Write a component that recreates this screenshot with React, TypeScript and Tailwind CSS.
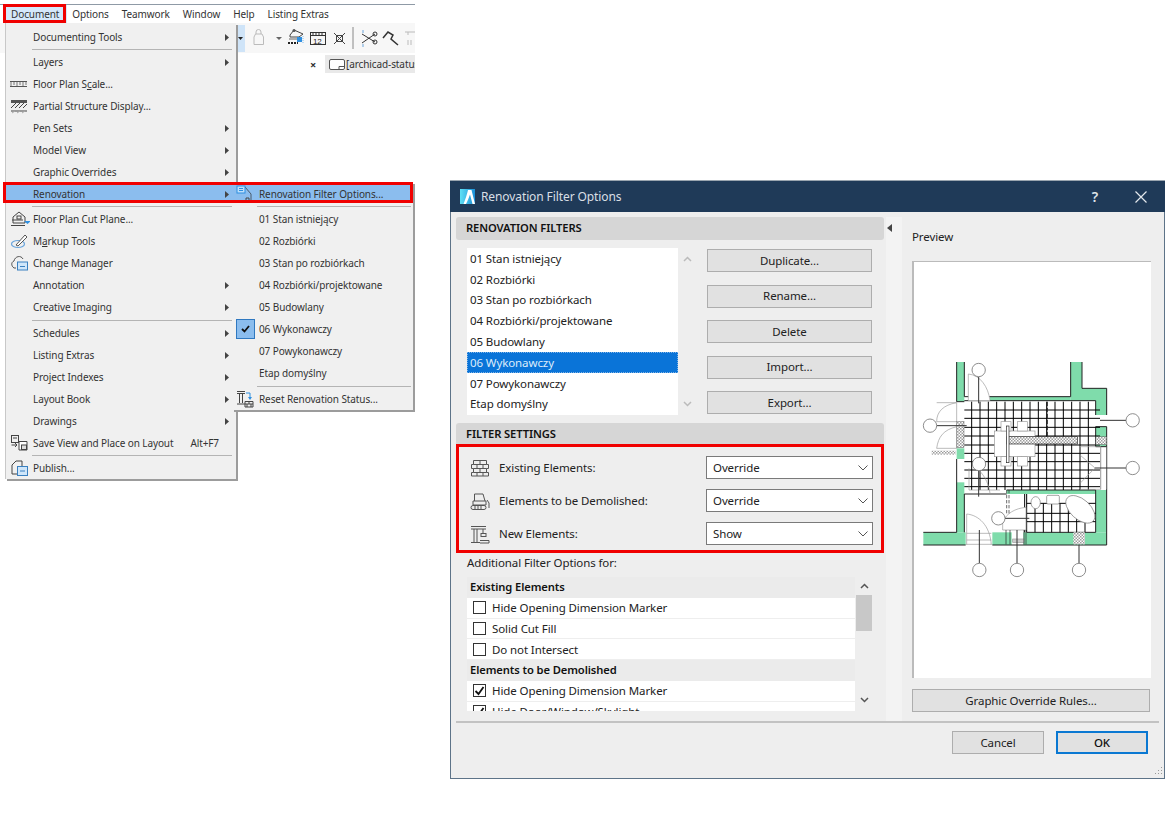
import React from "react";

const S = { fill: "none", stroke: "#444", strokeWidth: 1 } as const;

function Ic({ children, w = 20, h = 18 }: { children: React.ReactNode; w?: number; h?: number }) {
  return (
    <svg width={w} height={h} viewBox={`0 0 ${w} ${h}`} className="block">
      {children}
    </svg>
  );
}

const IScale = () => (
  <Ic>
    <path d="M0 6.5H17M0 11.5H17" {...S} stroke="#555" />
    <path d="M1 7v4M4 7v3M7 7v4M10 7v3M13 7v4M16 7v3" {...S} stroke="#777" />
  </Ic>
);
const IHatch = () => (
  <Ic>
    <rect x="1" y="3" width="16" height="3" fill="#555" />
    <path d="M1 11L6 6M5 11L10 6M9 11L14 6M13 11L17 7M1 14H17" {...S} stroke="#444" />
    <path d="M2 16l3-2M7 16l3-2M12 16l3-2" {...S} stroke="#aaa" />
  </Ic>
);
const ICut = () => (
  <Ic>
    <path d="M3 7L9 2L15 7V13H3Z" {...S} />
    <rect x="7" y="6" width="4" height="3" {...S} />
    <path d="M2 10H13M1 15.500H15" {...S} />
    <path d="M14 11H21L17.500 14Z" fill="#2f8fe0" />
  </Ic>
);
const IMarkup = () => (
  <Ic>
    <ellipse cx="8" cy="12" rx="6.500" ry="3.500" fill="none" stroke="#6aa5dc" strokeWidth="1.200" />
    <path d="M6 13L15 3L17 5L8 14Z" fill="#fff" stroke="#555" />
  </Ic>
);
const ICloud = () => (
  <Ic>
    <path d="M6 14H4C1 12 1 8 4 7C5 2 11 1 13 5" {...S} stroke="#555" />
    <rect x="7.500" y="8" width="10" height="8" fill="#cfe6fa" stroke="#3a80c0" />
    <path d="M10 12.500H15" stroke="#3a80c0" />
  </Ic>
);
const ISave = () => (
  <Ic>
    <rect x="1.500" y="1.500" width="7" height="7" {...S} />
    <path d="M3 4H7M1.500 11H7M5 9l2 2-2 2" {...S} />
    <path d="M9 7.500H17V16H9Z" fill="#fff" stroke="#444" />
    <rect x="11.500" y="11" width="5" height="4.500" fill="#ddd" stroke="#444" />
  </Ic>
);
const IPublish = () => (
  <Ic>
    <path d="M2 15V6L6 2H12V7" {...S} />
    <path d="M2 15H8" {...S} />
    <rect x="7.500" y="7.500" width="10" height="9" fill="#cfe6fa" stroke="#3a80c0" />
    <path d="M10 12H15" stroke="#3a80c0" />
  </Ic>
);
const IFilter = () => (
  <Ic>
    <path d="M2 2H9L15 9V16H7" {...S} stroke="#4a5a6a" />
    <rect x="1" y="1" width="8" height="7" fill="#bfe0fa" stroke="#2f8fe0" />
    <path d="M3 3.500H7M3 5.500H7" stroke="#2f8fe0" />
    <path d="M10 16v-3h3v3" {...S} />
  </Ic>
);
const IReset = () => (
  <Ic>
    <path d="M1 1.500H9M1 3.500H9M3.500 4V13M6.500 4V13M1 14H9" {...S} />
    <path d="M10 3H14V8" fill="none" stroke="#2f8fe0" />
    <path d="M12 7H16L14 10Z" fill="#2f8fe0" />
    <path d="M9 11.500H17V17H9ZM9 14H17M13 11.500V14M11 14V17M15 14V17" {...S} />
  </Ic>
);
const IBricks = () => (
  <Ic w={20} h={20}>
    <path d="M3.500 2.500H16.500V6.500H18.500V10.500H16.500V14.500H18.500V18H1.500V14.500H3.500V10.500H1.500V6.500H3.500Z" {...S} stroke="#555" />
    <path d="M3.500 6.500H16.500M3.500 10.500H16.500M3.500 14.500H16.500M10 2.500V6.500M7 6.500V10.500M13 6.500V10.500M10 10.500V14.500M7 14.500V18M13 14.500V18" {...S} stroke="#555" />
  </Ic>
);
const IDozer = () => (
  <Ic w={20} h={20}>
    <path d="M4.500 10V3H13L15 10" {...S} stroke="#555" />
    <path d="M3 10H16V14H3Z" {...S} stroke="#555" />
    <rect x="1" y="14.500" width="15" height="4" rx="2" {...S} stroke="#555" />
    <path d="M5 15V18M8 15V18M11 15V18M17 9L19 12V17" {...S} stroke="#555" />
  </Ic>
);
const ICrane = () => (
  <Ic w={20} h={20}>
    <path d="M1 2.500H16M1 5H16M4 5V18M7 5V18M1 18.500H10M13 5V9" {...S} stroke="#555" />
    <rect x="11" y="9.500" width="5" height="3" {...S} stroke="#555" />
    <path d="M10 16.500H19V19H10" {...S} stroke="#555" />
  </Ic>
);

type Row =
  | { sep: true; tall?: boolean }
  | { label: React.ReactNode; icon?: React.ReactNode; arrow?: boolean; hot?: boolean; kb?: string; check?: boolean };

const mainRows: Row[] = [
  { label: "Documenting Tools", arrow: true },
  { sep: true },
  { label: "Layers", arrow: true },
  { label: <>Floor Plan S<u>c</u>ale...</>, icon: <IScale /> },
  { label: "Partial Structure Display...", icon: <IHatch /> },
  { label: "Pen Sets", arrow: true },
  { label: "Model View", arrow: true },
  { label: "Graphic Overrides", arrow: true },
  { label: "Renovation", arrow: true, hot: true },
  { sep: true },
  { label: "Floor Plan Cut Plane...", icon: <ICut /> },
  { label: <>M<u>a</u>rkup Tools</>, icon: <IMarkup /> },
  { label: "Change Manager", icon: <ICloud /> },
  { label: "Annotation", arrow: true },
  { label: "Creative Imaging", arrow: true },
  { sep: true, tall: true },
  { label: "Schedules", arrow: true },
  { label: "Listing Extras", arrow: true },
  { label: "Project Indexes", arrow: true },
  { label: "Layout Book", arrow: true },
  { label: "Drawings", arrow: true },
  { label: "Save View and Place on Layout", icon: <ISave />, kb: "Alt+F7" },
  { sep: true },
  { label: "Publish...", icon: <IPublish /> },
];

const subRows: Row[] = [
  { label: "Renovation Filter Options...", icon: <IFilter />, hot: true },
  { sep: true },
  { label: "01 Stan istniejący" },
  { label: "02 Rozbiórki" },
  { label: "03 Stan po rozbiórkach" },
  { label: "04 Rozbiórki/projektowane" },
  { label: "05 Budowlany" },
  { label: "06 Wykonawczy", check: true },
  { label: "07 Powykonawczy" },
  { label: "Etap domyślny" },
  { sep: true, tall: true },
  { label: "Reset Renovation Status...", icon: <IReset /> },
];

function MenuRows({ rows, sub }: { rows: Row[]; sub?: boolean }) {
  return (
    <>
      {rows.map((r, i) =>
        "sep" in r ? (
          <div
            key={i}
            className={
              (r.tall ? "h-[4px] " : "h-[3px] ") +
              (sub ? "ml-[25px] mr-[2px] flex items-center" : "ml-[26px] mr-[4px] flex items-center")
            }
          >
            <div className="h-px w-full bg-[#b4b4b4]" />
          </div>
        ) : (
          <div
            key={i}
            className={
              r.hot
                ? "h-[20px] mb-[2px] pt-[2px] flex items-center bg-[#8bbdee]"
                : "h-[22px] flex items-center"
            }
          >
            <div className={sub ? "w-[27px] h-[22px] shrink-0 flex items-center justify-center" : "w-[27px] pl-[4px] shrink-0"}>
              {r.check ? (
                <div className="w-[19px] h-[20px] border border-[#2f78c0] bg-[#8bbdee] flex items-center justify-center">
                  <svg width="9" height="8" viewBox="0 0 9 8">
                    <path d="M1 4L3.500 6.500L8 1" fill="none" stroke="#111" strokeWidth="1.800" />
                  </svg>
                </div>
              ) : (
                r.icon
              )}
            </div>
            <span className="whitespace-nowrap">{r.label}</span>
            {r.kb && <span className="ml-auto mr-[17px] whitespace-nowrap">{r.kb}</span>}
            {r.arrow && (
              <svg width="4" height="7" viewBox="0 0 4 7" className="ml-auto mr-[7px]">
                <path d="M0 0L4 3.500L0 7Z" fill="#444" />
              </svg>
            )}
          </div>
        ),
      )}
    </>
  );
}

function Toolbar() {
  return (
    <div className="h-[30px] pl-[236px] flex items-center bg-[#f7f7f7]">
      <div className="w-[9px] h-[27px] bg-[#cfe4f8] flex items-center justify-center">
        <svg width="5" height="3" viewBox="0 0 5 3"><path d="M0 0H5L2.500 3Z" fill="#222" /></svg>
      </div>
      <svg width="170" height="26" viewBox="0 0 170 26" className="block">
        <path d="M11 9V7a2.500 2.500 0 0 1 5 0V9" fill="none" stroke="#bbb" />
        <path d="M10.500 9L9 12V19.500H18.500V12L17 9Z" fill="none" stroke="#bbb" />
        <path d="M31 12H37L34 15Z" fill="#666" />
        <path d="M45 10L49 5L58 9L54 12H45Z" fill="none" stroke="#444" />
        <circle cx="49" cy="5.500" r="1.500" fill="#555" />
        <path d="M43 18H53" stroke="#222" strokeDasharray="2 1" strokeWidth="2" />
        <path d="M44 14H52" stroke="#666" />
        <rect x="52" y="12" width="5" height="5" fill="#2f8fe0" />
        <path d="M58 11V18" stroke="#7fbdf0" strokeDasharray="1 1" />
        <rect x="65.500" y="7.500" width="15" height="12" fill="none" stroke="#333" />
        <path d="M66 10.500H80M68 8V10M71 8V10M74 8V10M77 8V10" stroke="#333" />
        <text x="68" y="18.500" fontSize="8" fill="#222" fontFamily="Liberation Sans, sans-serif">12</text>
        <path d="M89 8L100 19M100 8L89 19M91.500 10.500H97.500V16.500H91.500Z" fill="none" stroke="#444" />
        <path d="M108 2V24" stroke="#888" />
        <path d="M117 9L130 17M117 18L130 9" fill="none" stroke="#333" />
        <circle cx="130" cy="9" r="2" fill="none" stroke="#333" />
        <circle cx="130" cy="17" r="2" fill="none" stroke="#333" />
        <path d="M118 5V8M118 19V22" stroke="#6aa5dc" />
        <path d="M138 13L143 7L148 10L146 14L153 20" fill="none" stroke="#333" strokeWidth="1.500" />
        <path d="M160 7H170M163 7V10M163 15V20M166 15V20" fill="none" stroke="#bbb" />
      </svg>
    </div>
  );
}

function AppWindow() {
  return (
    <div className="absolute left-0 top-[4px] w-[415px] h-[480px]">
      <div className="h-px bg-[#8f9aa6]" />
      <div className="h-[18px] flex items-center bg-white">
        <span className="ml-[3px] px-[8px] h-full flex items-center bg-[#d5e8fa] mr-[5px]">Document</span>
        <div className="flex items-center gap-[13px]">
          {["Options", "Teamwork", "Window", "Help", "Listing Extras"].map((m) => (
            <span key={m}>{m}</span>
          ))}
        </div>
      </div>
      <Toolbar />
      <div className="h-[2px] bg-white" />
      <div className="h-[18px] flex items-center bg-white">
        <span className="ml-[310px] w-[15px] text-[11px] font-bold leading-none text-[#333]">×</span>
        <div className="flex-1 h-full bg-[#e9e9e9] flex items-center pl-[4px] overflow-hidden">
          <svg width="16" height="11" viewBox="0 0 16 11" className="shrink-0 mr-[1px]">
            <rect x="0.500" y="0.500" width="15" height="10" rx="1.500" fill="#fff" stroke="#555" />
            <path d="M10 10.500V7.500H15.500" fill="none" stroke="#555" />
          </svg>
          <span className="whitespace-nowrap">[archicad-status</span>
        </div>
      </div>

      <div className="absolute left-[5px] top-[19px] w-[231px] bg-[#f0f0f0] pt-[3px] border-l border-[#c8c8c8] shadow-[2px_2px_0_#9c9c9c]">
        <MenuRows rows={mainRows} />
      </div>
      <div className="absolute left-[232px] top-[178px] w-[181px] bg-[#f0f0f0] pt-[1px] shadow-[2px_2px_0_#9c9c9c]">
        <MenuRows rows={subRows} sub />
      </div>

      <div className="absolute left-[3px] top-0 w-[63px] h-[19px] border-[3px] border-[#f00000]" />
      <div className="absolute left-[3px] top-[178px] w-[410px] h-[21px] border-[3px] border-[#f00000]" />
    </div>
  );
}

function Btn({ children, cls = "" }: { children: React.ReactNode; cls?: string }) {
  return (
    <div className={"h-[23px] bg-[#e1e1e1] border border-[#adadad] flex items-center justify-center text-[#222] " + cls}>
      {children}
    </div>
  );
}

function SectionHead({ children }: { children: React.ReactNode }) {
  return (
    <div className="h-[23px] rounded-[3px] bg-[#d6d6d6] pl-[10px] flex items-center text-[11.200px] font-semibold text-[#111]">
      {children}
    </div>
  );
}

function Chevron({ up, color = "#bbb" }: { up?: boolean; color?: string }) {
  return (
    <svg width="9" height="6" viewBox="0 0 9 6">
      <path d={up ? "M1 5L4.500 1.500L8 5" : "M1 1L4.500 4.500L8 1"} fill="none" stroke={color} strokeWidth="1.500" />
    </svg>
  );
}

function Select({ value }: { value: string }) {
  return (
    <div className="w-[167px] h-[23px] bg-white border border-[#7a7a7a] pl-[6px] pr-[4px] flex items-center justify-between">
      <span>{value}</span>
      <svg width="10" height="6" viewBox="0 0 10 6"><path d="M0.500 0.500L5 5L9.500 0.500" fill="none" stroke="#555" /></svg>
    </div>
  );
}

function Cb({ checked }: { checked?: boolean }) {
  return (
    <div className="w-[13px] h-[13px] border border-[#333] bg-white shrink-0 flex items-center justify-center">
      {checked && (
        <svg width="11" height="10" viewBox="0 0 11 10">
          <path d="M1.500 5L4.500 8L9.500 1" fill="none" stroke="#111" strokeWidth="1.800" />
        </svg>
      )}
    </div>
  );
}

const filters = [
  "01 Stan istniejący",
  "02 Rozbiórki",
  "03 Stan po rozbiórkach",
  "04 Rozbiórki/projektowane",
  "05 Budowlany",
  "06 Wykonawczy",
  "07 Powykonawczy",
  "Etap domyślny",
];

function CheckRow({ label, checked }: { label: string; checked?: boolean }) {
  return (
    <div className="h-[20.800px] shrink-0 bg-white border-b border-[#eeeeee] pl-[6px] flex items-center gap-[6px]">
      <Cb checked={checked} />
      <span className="whitespace-nowrap">{label}</span>
    </div>
  );
}

function OptHead({ label }: { label: string }) {
  return (
    <div className="h-[20.800px] shrink-0 bg-[#ebebeb] pl-[3px] flex items-center text-[11.200px] font-semibold text-[#111]">{label}</div>
  );
}

function Plan() {
  const vx = [215, 240, 265, 290, 315, 340, 365, 390, 415, 440, 465, 490, 515, 540, 565];
  const hy = [180, 205, 232, 258, 285, 310, 335, 360, 385, 410];
  const bx = [405, 430, 455, 480, 505, 530, 555];
  const by = [460, 490, 515];
  const bubbles = [
    [236, 60], [90, 227], [698, 211], [698, 354], [237, 342], [295, 505], [238, 660], [351, 660], [537, 660],
  ];
  const g = "#7fdcab";
  return (
    <svg width="239" height="417" viewBox="36 -267 717 1251" className="block">
      <defs>
        <pattern id="dots" width="9" height="9" patternUnits="userSpaceOnUse">
          <rect width="9" height="9" fill="#fff" />
          <rect x="1" y="1" width="3" height="3" fill="#222" />
          <rect x="5" y="5" width="3" height="3" fill="#222" />
        </pattern>
      </defs>
      <g fill={g}>
        <rect x="170" y="36" width="23" height="119" />
        <rect x="270" y="140" width="242" height="12" />
        <path d="M512 36H546V115H620V195H587V152H512Z" />
        <rect x="587" y="230" width="33" height="60" />
        <rect x="170" y="295" width="23" height="32" />
        <rect x="170" y="397" width="23" height="150" />
        <rect x="70" y="547" width="127" height="38" />
        <rect x="277" y="547" width="58" height="38" />
        <rect x="370" y="547" width="250" height="38" />
        <rect x="587" y="420" width="33" height="127" />
        <rect x="320" y="420" width="267" height="12" />
      </g>
      <g fill="none" stroke="#222" strokeWidth="3">
        <path d="M170 36V155H193M193 36V140H512V36M546 36V115H620V195M587 152V195" />
        <path d="M70 547H170V327M70 585H197M277 585H620V230H587V290H620M193 547V432H320" />
        <path d="M380 547H587V420H320" />
        <path d="M193 152H587" />
      </g>
      <g stroke="#000" strokeWidth="3">
        {vx.map((x) => <path key={x} d={`M${x} 155V420`} />)}
        {hy.map((y) => <path key={y} d={`M193 ${y}H600`} />)}
        {bx.map((x) => <path key={x} d={`M${x} 460V547`} />)}
        {by.map((y) => <path key={y} d={`M380 ${y}H587`} />)}
        <path d="M380 432V547M374 432V547" />
      </g>
      <path d="M540 290H602V418H540M540 315L585 354L540 400M602 290V418M620 290V418" fill="none" stroke="#999" strokeWidth="2" />
      <rect x="283" y="243" width="122" height="77" fill="#fff" stroke="#999" strokeWidth="2" />
      <g fill="#fff" stroke="#999" strokeWidth="2">
        <rect x="303" y="215" width="30" height="28" />
        <rect x="352" y="215" width="30" height="28" />
        <rect x="303" y="320" width="30" height="28" />
        <rect x="352" y="320" width="30" height="28" />
      </g>
      <rect x="320" y="260" width="212" height="22" fill="url(#dots)" stroke="#222" strokeWidth="2" />
      <rect x="587" y="260" width="33" height="24" fill="url(#dots)" stroke="#222" />
      <rect x="170" y="215" width="22" height="78" fill="url(#dots)" stroke="#222" />
      <rect x="520" y="547" width="35" height="36" fill="url(#dots)" />
      <rect x="95" y="302" width="72" height="12" fill="url(#dots)" />
      <rect x="319" y="228" width="8" height="110" fill="#fff" stroke="#222" strokeWidth="2" />
      <g fill="#fff" stroke="#999" strokeWidth="2">
        <path d="M110 158H170V215H110C110 185 130 165 170 158" fill="none" />
        <path d="M110 295H170V230C130 240 115 260 110 295" fill="none" />
        <path d="M205 152V72C240 75 265 110 270 152Z" />
        <path d="M200 585V492C235 495 270 525 274 585" fill="none" />
        <path d="M200 550H274M200 570H274M200 583H274" fill="none" />
        <path d="M207 420V355M207 420H300M225 350C250 370 265 395 270 430" fill="none" />
        <path d="M308 515C320 490 345 475 378 472V540H308Z" />
        <rect x="338" y="567" width="34" height="10" fill="#ccc" />
      </g>
      <g fill="#fff" stroke="#777" strokeWidth="2">
        <ellipse cx="407" cy="458" rx="14" ry="18" />
        <rect x="440" y="436" width="38" height="26" rx="4" />
        <ellipse cx="541" cy="478" rx="52" ry="30" transform="rotate(42 541 478)" />
      </g>
      <path d="M320 420V495M327 420V495" stroke="#222" strokeWidth="2" strokeDasharray="10 5" />
      <path d="M442 155V260" stroke="#222" strokeWidth="3" strokeDasharray="14 4" />
      <path d="M318 540V583M330 540V583M372 540V583M378 540V583" stroke="#222" strokeWidth="2" />
      <g stroke="#333" strokeWidth="3" fill="none">
        <path d="M236 80V160M110 227H200M680 211H600M680 354H585M236 362V440M315 505H388M238 640V540M351 640V540M537 640V585" />
      </g>
      <g fill="#fff" stroke="#777" strokeWidth="2.500">
        {bubbles.map(([x, y]) => <circle key={`${x}-${y}`} cx={x} cy={y} r="20" />)}
      </g>
    </svg>
  );
}

function Dialog() {
  return (
    <div className="absolute left-[450px] top-[180px] w-[715px] h-[599px] flex flex-col bg-[#eeeeee] border-x border-b border-[#5d7388] text-[11.5px] text-[#222]">
      <div className="h-[32px] shrink-0 -mx-px bg-[#1f3a58] flex items-center pl-[10px] text-[#d9dfe5] text-[12px] border-t border-[#9aa5af]">
        <svg width="15" height="15" viewBox="0 0 15 15" className="mr-[6px]">
          <defs>
            <linearGradient id="lg" x1="0" y1="0" x2="1" y2="0">
              <stop offset="0" stopColor="#5fe0f5" />
              <stop offset="1" stopColor="#1a8fd8" />
            </linearGradient>
          </defs>
          <rect width="15" height="15" fill="url(#lg)" />
          <path d="M3.500 15C5.500 10 7 5 8 1H11.500L15 15H12.500L10 5.500C9 8.500 7.500 12 6 15Z" fill="#fff" />
        </svg>
        <span>Renovation Filter Options</span>
        <span className="ml-auto text-[14px] font-semibold text-[#dfe4e9]">?</span>
        <svg width="12" height="12" viewBox="0 0 12 12" className="ml-[37px] mr-[18px]">
          <path d="M0.500 0.500L11.500 11.500M11.500 0.500L0.500 11.500" stroke="#e4e8ec" strokeWidth="1.200" />
        </svg>
      </div>

      <div className="flex-1 flex min-h-0">
        <div className="w-[433px] shrink-0 pl-[5px] pt-[5px]">
          <SectionHead>RENOVATION FILTERS</SectionHead>
          <div className="mt-[8px] ml-[11px] flex">
            <div className="w-[211px] h-[167px] bg-white flex flex-col">
              {filters.map((f) => (
                <div
                  key={f}
                  className={
                    f === "06 Wykonawczy"
                      ? "h-[20.800px] flex items-center pl-[3px] bg-[#0a74d8] text-[#dcecfb] outline-1 -outline-offset-1 outline-dotted outline-[#7fb3e6]"
                      : "h-[20.800px] flex items-center pl-[3px]"
                  }
                >
                  {f}
                </div>
              ))}
            </div>
            <div className="w-[18px] h-[167px] flex flex-col items-center justify-between py-[8px]">
              <Chevron up />
              <Chevron />
            </div>
            <div className="w-[165px] ml-[11px] pt-px flex flex-col gap-[12.500px]">
              {["Duplicate...", "Rename...", "Delete", "Import...", "Export..."].map((b) => (
                <Btn key={b}>{b}</Btn>
              ))}
            </div>
          </div>

          <div className="mt-[8px]">
            <SectionHead>FILTER SETTINGS</SectionHead>
          </div>

          <div className="relative -mt-[2px] h-[109px] border-[3px] border-[#f00000] pl-[11px] pr-[8px] pt-[9px] flex flex-col gap-[10px]">
            {[
              { icon: <IBricks />, label: "Existing Elements:", value: "Override" },
              { icon: <IDozer />, label: "Elements to be Demolished:", value: "Override" },
              { icon: <ICrane />, label: "New Elements:", value: "Show" },
            ].map((r) => (
              <div key={r.label} className="h-[23px] flex items-center">
                <div className="w-[29px] shrink-0">{r.icon}</div>
                <span className="whitespace-nowrap">{r.label}</span>
                <div className="ml-auto"><Select value={r.value} /></div>
              </div>
            ))}
          </div>

          <div className="h-[20px] ml-[11px] flex items-center">Additional Filter Options for:</div>

          <div className="mt-[4px] ml-[11px] flex">
            <div className="w-[388px] h-[134px] overflow-hidden flex flex-col">
              <OptHead label="Existing Elements" />
              <CheckRow label="Hide Opening Dimension Marker" />
              <CheckRow label="Solid Cut Fill" />
              <CheckRow label="Do not Intersect" />
              <OptHead label="Elements to be Demolished" />
              <CheckRow label="Hide Opening Dimension Marker" checked />
              <CheckRow label="Hide Door/Window/Skylight" checked />
            </div>
            <div className="w-[16px] h-[134px] ml-px flex flex-col items-center">
              <div className="h-[18px] flex items-center"><Chevron up color="#555" /></div>
              <div className="w-full h-[36px] bg-[#c8c8c8]" />
              <div className="mt-auto h-[20px] mb-[1px] flex items-center"><Chevron color="#555" /></div>
            </div>
          </div>
        </div>

        <div className="w-[16px] shrink-0 mt-[5px] h-[505px] ml-[2px] bg-[#f3f3f3]">
          <svg width="5" height="8" viewBox="0 0 5 8" className="mt-[7px] ml-[1px]"><path d="M5 0V8L0 4Z" fill="#444" /></svg>
        </div>

        <div className="flex-1 pl-[10px] pr-[14px]">
          <div className="h-[49px] pt-[16px] text-[#222]">Preview</div>
          <div className="w-[239px] h-[417px] bg-white border-t border-l-2 border-[#bbbbbb] overflow-hidden">
            <div className="-ml-[2px] -mt-px"><Plan /></div>
          </div>
          <Btn cls="mt-[11px] w-[238px]">Graphic Override Rules...</Btn>
        </div>
      </div>

      <div className="h-[57px] shrink-0 mx-[5px] border-t-2 border-[#c2c2c2] relative flex justify-end gap-[12px] pt-[8px] pr-[11px]">
        <Btn cls="w-[92px]">Cancel</Btn>
        <div className="w-[92px] h-[23px] bg-[#e1e1e1] border-2 border-[#0a78d2] flex items-center justify-center font-medium text-[#111]">OK</div>
      </div>
      <svg width="11" height="11" viewBox="0 0 11 11" className="absolute right-[1px] bottom-[1px]">
        <path d="M9 1h1v1H9zM6 4h1v1H6zM9 4h1v1H9zM3 7h1v1H3zM6 7h1v1H6zM9 7h1v1H9z" fill="#999" />
      </svg>
    </div>
  );
}

export default function App() {
  return (
    <div className="relative w-[1169px] h-[826px] bg-white overflow-hidden text-[10px] tracking-[-0.1px] text-[#333] font-['Noto_Sans',sans-serif]">
      <AppWindow />
      <Dialog />
    </div>
  );
}
